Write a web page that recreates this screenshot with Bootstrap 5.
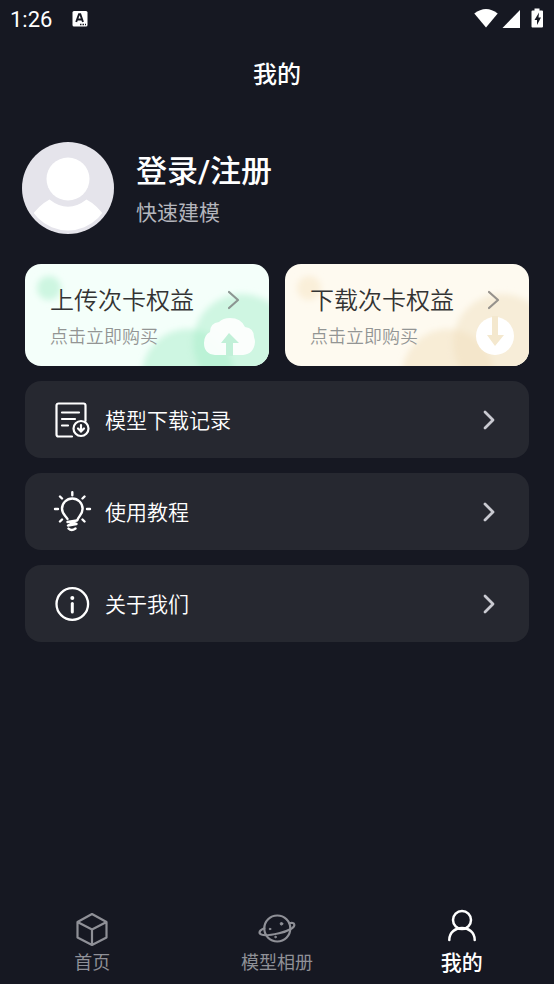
<!DOCTYPE html>
<html lang="zh-CN">
<head>
<meta charset="utf-8">
<meta name="viewport" content="width=device-width, initial-scale=1">
<title>我的</title>
<link rel="stylesheet" href="https://cdn.jsdelivr.net/npm/bootstrap@5.3.0/dist/css/bootstrap.min.css">
<style>
  body { background: #161822; color: #fff; font-family: Roboto, "Noto Sans CJK SC", sans-serif; }
  svg { display: block; flex: none; }
  .status-bar { height: 38px; padding: 0 10px; }
  .clock { font-size: 22px; line-height: 24px; padding-top: 2px; }
  .ime { margin-left: 20px; }
  .page-title { font-size: 24px; line-height: 36px; font-weight: 500; padding-top: 19px; }
  .profile { padding: 49px 22px 30px; gap: 22px; }
  .profile-name { font-size: 31px; line-height: 44px; font-weight: 500; padding-top: 2px; }
  .profile-note { font-size: 21px; line-height: 32px; color: #b4b5bc; margin-top: 3px; }
  .content { padding: 0 25px; }
  .passes { gap: 16px; }
  .pass { flex: 1 1 0; height: 102px; border-radius: 16px; padding: 20px 25px; color: #333; overflow: hidden; font-weight: 350; }
  .pass:hover { color: #333; }
  .pass-up { background: #f4fffa; }
  .pass-down { background: #fefaf0; }
  .pass-art { position: absolute; right: 0; bottom: 0; }
  .pass-name { font-size: 24px; line-height: 32px; padding-top: 1px; }
  .pass-note { font-size: 18px; line-height: 28px; color: #939594; margin-top: 6px; }
  .menu-list { gap: 15px; padding-top: 15px; }
  .menu-row { height: 77px; border-radius: 16px; background: #262830; color: #fff; font-size: 21px; font-weight: 350; padding: 0 33px 0 28px; gap: 13px; }
  .menu-row span { padding-top: 4px; }
  .menu-row:hover { color: #fff; }
  .tab-bar { height: 82px; padding-bottom: 7px; }
  .tab { flex: 1 1 0; color: #8f9097; font-size: 18px; line-height: 28px; }
  .tab:hover { color: #8f9097; }
  .tab.active { color: #fff; font-size: 21px; font-weight: 500; }
</style>
</head>
<body>
<div class="min-vh-100 d-flex flex-column">
  <div class="status-bar d-flex align-items-center">
    <span class="clock">1:26</span>
    <svg class="ime" width="16" height="17" viewBox="0 0 16 17" role="img" aria-label="输入法"><rect x=".5" y="0" width="15" height="15.500" rx="1.500" fill="#fff"/><path d="M4.200 11 7 3.300h1.300L11 11M5.300 8.500H10" fill="none" stroke="#161822" stroke-width="1.900"/><path d="M8 13.500h1.500m1 0H12m1 0h1" stroke="#161822" stroke-width="1.500"/></svg>
    <svg class="ms-auto" width="70" height="22" viewBox="0 0 70 22" role="img" aria-label="网络和电池状态"><path d="M.3 5.500Q12-3.500 23.700 5.500L12 19.500Z" fill="#fff"/><path d="M28.500 20 46 2v18Z" fill="#fff"/><path d="M60.500.5h5v2H68a1 1 0 0 1 1 1v15a1 1 0 0 1-1 1H58.500a1 1 0 0 1-1-1v-15a1 1 0 0 1 1-1h2Z" fill="#fff"/><path d="M65 4.500 60.500 12H63v5l4-7.500h-2.500Z" fill="#161822"/></svg>
  </div>
  <h1 class="page-title text-center m-0">我的</h1>

  <main class="flex-grow-1">
    <a href="#login" class="profile d-flex align-items-center text-white text-decoration-none">
      <svg width="92" height="92" viewBox="0 0 92 92" role="img" aria-label="头像"><defs><clipPath id="face"><circle cx="46" cy="46" r="42.500"/></clipPath></defs><circle cx="46" cy="46" r="46" fill="#e5e4eb"/><g clip-path="url(#face)"><path d="M8 76Q17 63 27.500 57.500 46 72 64.500 57.500 75 63 84 76v16H8Z" fill="#fff"/></g><circle cx="46" cy="37" r="21.500" fill="#fff"/></svg>
      <div>
        <div class="profile-name">登录/注册</div>
        <div class="profile-note">快速建模</div>
      </div>
    </a>

    <div class="content">
      <div class="passes d-flex">
        <a href="#upload" class="pass pass-up position-relative text-decoration-none">
          <svg class="pass-art" width="244" height="102" viewBox="0 0 244 102" aria-hidden="true">
            <defs><filter id="soft" x="-30%" y="-30%" width="160%" height="160%"><feGaussianBlur stdDeviation="3"/></filter></defs>
            <g filter="url(#soft)"><circle cx="24" cy="24" r="12" fill="#cdf6e1"/><circle cx="217" cy="79" r="49" fill="#cff6e2"/><circle cx="163" cy="111" r="46" fill="#a8edca" fill-opacity=".5"/></g>
            <path d="M190 91q-11-1-11-12 0-8 6-11 0-9 9-10 4-4 11-4 11 0 15 9 9 1 9 10 1 3 1 5-1 12-12 13Z" fill="#fff" fill-opacity=".9"/>
            <path d="m204 69-8 10h5v13h7V79h6Z" fill="#c1f0d8"/>
          </svg>
          <div class="position-relative">
            <div class="d-flex justify-content-between align-items-center"><span class="pass-name text-nowrap">上传次卡权益</span><svg width="16" height="22" viewBox="0 0 16 22"><path d="m1 2 9 8-9 8" fill="none" stroke="#8c9692" stroke-width="2.200" stroke-linecap="round" stroke-linejoin="round"/></svg></div>
            <div class="pass-note">点击立即购买</div>
          </div>
        </a>
        <a href="#download" class="pass pass-down position-relative text-decoration-none">
          <svg class="pass-art" width="244" height="102" viewBox="0 0 244 102" aria-hidden="true">
            <g filter="url(#soft)"><circle cx="24" cy="24" r="12" fill="#faefd9"/><circle cx="217" cy="79" r="49" fill="#f7edd8"/><circle cx="163" cy="111" r="46" fill="#f1e0bd" fill-opacity=".5"/></g>
            <circle cx="210" cy="72" r="19" fill="#fff"/>
            <path d="M207 52h6v19h6l-9 11-8-11h5Z" fill="#f4e8ce"/>
          </svg>
          <div class="position-relative">
            <div class="d-flex justify-content-between align-items-center"><span class="pass-name text-nowrap">下载次卡权益</span><svg width="16" height="22" viewBox="0 0 16 22"><path d="m1 2 9 8-9 8" fill="none" stroke="#96928c" stroke-width="2.200" stroke-linecap="round" stroke-linejoin="round"/></svg></div>
            <div class="pass-note">点击立即购买</div>
          </div>
        </a>
      </div>

      <nav class="menu-list d-flex flex-column" aria-label="功能">
        <a href="#records" class="menu-row d-flex align-items-center text-decoration-none">
          <svg width="39" height="42" viewBox="0 0 39 42" fill="none" stroke="#fff" stroke-width="2.200" stroke-linecap="round"><path d="M19 37.500H5.500a2 2 0 0 1-2-2v-29a2 2 0 0 1 2-2h25a2 2 0 0 1 2 2V22"/><path d="M9 13.500h17M9 20h13M9 26.500h6"/><circle cx="28" cy="29.500" r="7.500"/><path d="M28 26v6M25 29.500l3 3 3-3"/></svg>
          <span>模型下载记录</span><svg class="ms-auto" width="14" height="22" viewBox="0 0 14 22"><path d="m3 3 8 8-8 8" fill="none" stroke="#c9cad1" stroke-width="2.800" stroke-linecap="round" stroke-linejoin="round"/></svg>
        </a>
        <a href="#guide" class="menu-row d-flex align-items-center text-decoration-none">
          <svg width="39" height="42" viewBox="0 0 39 42" fill="none" stroke="#fff" stroke-width="2.400" stroke-linecap="round" stroke-linejoin="round"><path d="M14.500 28C13 25 9 23 9 17.800a10.300 10.300 0 0 1 20.600 0c0 5.200-3.600 7-5.100 11"/><path d="m14.500 31 9.500-1.500M24 29.500l-9 5 8.500-1.500M15.500 37.500q3 3 7 0"/><path d="M19.300 1.200v3M2 18h3M34 18h3M7 5.500l2 2M31.500 5.500l-2 2M7 30.500l2-2M31.500 30.500l-2-2"/></svg>
          <span>使用教程</span><svg class="ms-auto" width="14" height="22" viewBox="0 0 14 22"><path d="m3 3 8 8-8 8" fill="none" stroke="#c9cad1" stroke-width="2.800" stroke-linecap="round" stroke-linejoin="round"/></svg>
        </a>
        <a href="#about" class="menu-row d-flex align-items-center text-decoration-none">
          <svg width="39" height="42" viewBox="0 0 39 42"><circle cx="19.300" cy="21" r="15.800" fill="none" stroke="#fff" stroke-width="2.300"/><circle cx="19.300" cy="15" r="2" fill="#fff"/><path d="M19.300 20.500v8.500" stroke="#fff" stroke-width="3" stroke-linecap="round"/></svg>
          <span>关于我们</span><svg class="ms-auto" width="14" height="22" viewBox="0 0 14 22"><path d="m3 3 8 8-8 8" fill="none" stroke="#c9cad1" stroke-width="2.800" stroke-linecap="round" stroke-linejoin="round"/></svg>
        </a>
      </nav>
    </div>
  </main>

  <nav class="tab-bar d-flex align-items-end" aria-label="主导航">
    <a href="#home" class="tab d-flex flex-column align-items-center text-decoration-none">
      <svg width="38" height="38" viewBox="0 0 38 38" fill="none" stroke="#8f9097" stroke-width="2.200" stroke-linejoin="round"><path d="m19 3 14.500 8v15.500L19 34 4.500 26.500V11ZM4.500 11 19 18.500l14.500-7.500M19 18.500V34"/></svg>
      <span>首页</span>
    </a>
    <a href="#album" class="tab d-flex flex-column align-items-center text-decoration-none">
      <svg width="38" height="38" viewBox="0 0 38 38" fill="none" stroke="#8f9097" stroke-width="2.200" stroke-linecap="round"><circle cx="19.300" cy="17.500" r="13"/><path d="M6.300 17.300C3 18.500 1 20.500 1.700 22.300 3 25 12 24.300 21 22.300S37 16.500 36.300 13.500C36 12 34 11.500 31.500 12.300"/><circle cx="23.500" cy="12.800" r="1.300" fill="#8f9097" stroke-width="1"/><circle cx="12" cy="18" r=".8" fill="#8f9097" stroke-width="1"/><circle cx="17.500" cy="26" r=".8" fill="#8f9097" stroke-width="1"/></svg>
      <span>模型相册</span>
    </a>
    <a href="#me" class="tab active d-flex flex-column align-items-center text-decoration-none" aria-current="page">
      <svg width="38" height="40" viewBox="0 0 38 40" fill="none" stroke="#fff" stroke-width="2.500" stroke-linecap="round"><circle cx="19" cy="11" r="9"/><path d="M6.300 31C6.300 15 31.700 15 31.700 31"/></svg>
      <span>我的</span>
    </a>
  </nav>
</div>
<script src="https://cdn.jsdelivr.net/npm/bootstrap@5.3.0/dist/js/bootstrap.bundle.min.js"></script>
</body>
</html>
